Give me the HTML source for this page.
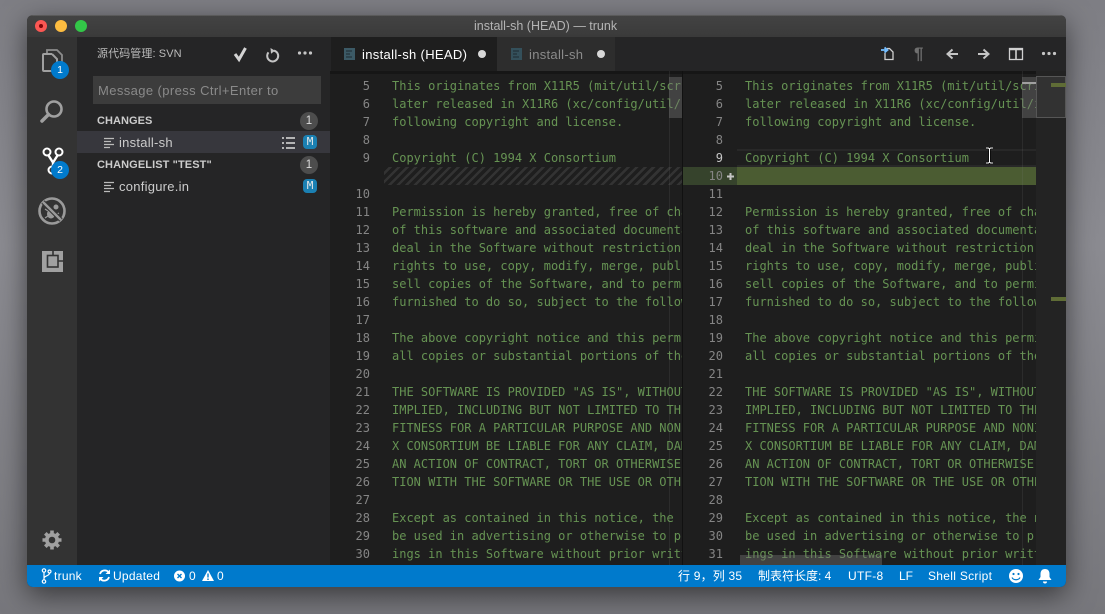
<!DOCTYPE html>
<html><head><meta charset="utf-8">
<style>
*{box-sizing:border-box}
html,body{margin:0;padding:0;width:1105px;height:614px;overflow:hidden;background:#85858b}
body{position:relative;font-family:"Liberation Sans","Noto Sans CJK SC",sans-serif}
.a{position:absolute}
#bg{left:0;top:0;width:1105px;height:614px;background:linear-gradient(180deg,#7e7e84 0,#8b8b91 40%,#77777c 100%)}
#win{left:27px;top:15px;width:1039px;height:572px;border-radius:6px;overflow:hidden;background:#1e1e1e;box-shadow:0 8px 28px rgba(0,0,0,.55)}
.t{position:absolute;white-space:nowrap}
.code{position:absolute;font:12px/18px "DejaVu Sans Mono","Liberation Mono",monospace;color:#669353;white-space:pre;overflow:hidden}
.nums{position:absolute;font:12px/18px "DejaVu Sans Mono","Liberation Mono",monospace;color:#858585;text-align:right;white-space:pre}
.badge{position:absolute;width:18px;height:18px;border-radius:9px;background:#007acc;color:#fff;font-size:10.5px;line-height:18px;text-align:center}
.cnt{position:absolute;width:18px;height:18px;border-radius:9px;background:#4d4d4d;color:#ddd;font-size:11.5px;line-height:18px;text-align:center}
.m{position:absolute;width:14px;height:14px;border-radius:4px;background:#1b80b2;color:#e8e8e8;font:11px/14px "DejaVu Sans Mono",monospace;text-align:center}
</style></head><body>
<div class="a" id="bg"></div>
<div class="a" id="win">
<!-- title bar -->
<div class="a" style="left:0;top:0;width:1039px;height:22px;background:linear-gradient(#434343,#3a3a3a);border-top:1px solid #5a5a5a"></div>
<div class="a" style="left:8px;top:5px;width:12px;height:12px;border-radius:6px;background:#fc5753"></div>
<div class="a" style="left:12px;top:9px;width:4px;height:4px;border-radius:2px;background:#7e0508"></div>
<div class="a" style="left:28px;top:5px;width:12px;height:12px;border-radius:6px;background:#fdbc40"></div>
<div class="a" style="left:48px;top:5px;width:12px;height:12px;border-radius:6px;background:#33c748"></div>
<div class="t" style="left:447px;top:3px;font-size:12.5px;line-height:16px;color:#b4b4b4">install-sh (HEAD) — trunk</div>
<!-- activity bar -->
<div class="a" style="left:0;top:22px;width:50px;height:528px;background:#333"></div>
<!-- sidebar -->
<div class="a" style="left:50px;top:22px;width:253px;height:528px;background:#252526"></div>
<svg class="a" style="left:0;top:22px" width="50" height="528" viewBox="0 0 50 528" fill="none">
<path d="M20 16v-3h10l5 5v14" stroke="#9c9c9c" stroke-width="1.800" opacity=".85"/>
<path d="M25 17h-8a1 1 0 0 0-1 1v15a1 1 0 0 0 1 1h10M25 17l5 5v10" stroke="#a0a0a0" stroke-width="2" fill="#333"/>
<circle cx="27" cy="72" r="7.500" stroke="#a0a0a0" stroke-width="2.600"/>
<path d="M21.500 77.500l-6.500 6.500" stroke="#a0a0a0" stroke-width="3.500" stroke-linecap="round"/>
<circle cx="20" cy="115" r="3.500" stroke="#fff" stroke-width="2"/>
<circle cx="32" cy="115" r="3.500" stroke="#fff" stroke-width="2"/>
<circle cx="25" cy="133" r="3.500" stroke="#fff" stroke-width="2"/>
<path d="M21.500 118.500l4.500 7 4.500-7M26 125v5" stroke="#fff" stroke-width="2.400"/>
<circle cx="25" cy="174" r="12.500" stroke="#9a9a9a" stroke-width="2.600"/>
<ellipse cx="24" cy="177" rx="4" ry="4.500" fill="#9a9a9a"/>
<circle cx="29" cy="170" r="2.500" fill="#9a9a9a"/>
<path d="M18 172l3 2M18 181l3-2M32 176l-2 1" stroke="#9a9a9a" stroke-width="1.200"/>
<path d="M16 165l18 18" stroke="#333" stroke-width="4.500"/>
<path d="M16 165l18 18" stroke="#9a9a9a" stroke-width="2.400"/>
<rect x="15" y="214" width="21" height="21" fill="#a0a0a0"/>
<rect x="20.500" y="218.500" width="10.500" height="11.500" fill="#a0a0a0" stroke="#333" stroke-width="1.600"/>
<path d="M26 214v4.500M31 224h5" stroke="#333" stroke-width="1.600"/>
<g stroke="#a0a0a0" stroke-width="3.600"><path d="M25 493.500v19M15.500 503h19M18.300 496.300l13.400 13.400M31.700 496.300l-13.400 13.400"/></g>
<circle cx="25" cy="503" r="7" fill="#a0a0a0"/>
<circle cx="25" cy="503" r="3.300" fill="#333"/>
</svg>
<div class="badge" style="left:24px;top:46px">1</div>
<div class="badge" style="left:24px;top:146px">2</div>
<!-- sidebar content -->
<div class="t" style="left:70px;top:31px;font-size:11px;line-height:16px;color:#bbb;letter-spacing:.1px">源代码管理: SVN</div>
<svg class="a" style="left:200px;top:28px" width="100" height="24" viewBox="0 0 100 24" fill="none">
<path d="M8 11l4 5.500L18.500 5" stroke="#d4d4d4" stroke-width="3"/>
<path d="M47 7.600a5.500 5.500 0 1 1-5.500 1.800" stroke="#c5c5c5" stroke-width="2"/>
<path d="M43.500 5l4.500 2.800-4 3z" fill="#c5c5c5"/>
<circle cx="72.500" cy="10" r="1.600" fill="#c5c5c5"/><circle cx="78" cy="10" r="1.600" fill="#c5c5c5"/><circle cx="83.500" cy="10" r="1.600" fill="#c5c5c5"/>
</svg>
<div class="a" style="left:66px;top:61px;width:228px;height:28px;background:#3c3c3c"></div>
<div class="t" style="left:71px;top:68px;font-size:13px;line-height:16px;color:#8a8a8a;letter-spacing:.4px">Message (press Ctrl+Enter to</div>
<div class="t" style="left:70px;top:98px;font-size:11px;line-height:16px;font-weight:bold;color:#cccccc;letter-spacing:.05px">CHANGES</div>
<div class="cnt" style="left:273px;top:97px">1</div>
<div class="a" style="left:50px;top:116px;width:253px;height:22px;background:#37373d"></div>
<svg class="a" style="left:77px;top:122px" width="12" height="12"><path d="M0 1.500h10M0 4.500h7M0 7.500h10M0 10.500h6" stroke="#bbb" stroke-width="1.200"/></svg>
<div class="t" style="left:92px;top:120px;font-size:13px;line-height:16px;color:#ccc;letter-spacing:.25px">install-sh</div>
<svg class="a" style="left:255px;top:121px" width="14" height="14"><path d="M4 2h9M4 7h9M4 12h9" stroke="#ddd" stroke-width="1.500"/><path d="M0 2h2M0 7h2M0 12h2" stroke="#ddd" stroke-width="1.500"/></svg>
<div class="m" style="left:276px;top:120px">M</div>
<div class="t" style="left:70px;top:142px;font-size:11px;line-height:16px;font-weight:bold;color:#cccccc;letter-spacing:.1px">CHANGELIST "TEST"</div>
<div class="cnt" style="left:273px;top:141px">1</div>
<svg class="a" style="left:77px;top:166px" width="12" height="12"><path d="M0 1.500h10M0 4.500h7M0 7.500h10M0 10.500h6" stroke="#bbb" stroke-width="1.200"/></svg>
<div class="t" style="left:92px;top:164px;font-size:13px;line-height:16px;color:#ccc;letter-spacing:.25px">configure.in</div>
<div class="m" style="left:276px;top:164px">M</div>
<!-- tabs -->
<div class="a" style="left:303px;top:22px;width:736px;height:34px;background:#252526"></div>
<div class="a" style="left:304px;top:22px;width:166px;height:34px;background:#1e1e1e"></div>
<div class="a" style="left:470px;top:22px;width:118px;height:34px;background:#2d2d2d"></div>
<svg class="a" style="left:317px;top:33px" width="11" height="12"><rect width="11" height="12" fill="#3c5a66"/><path d="M2 3h6M2 6h4M2 9h6" stroke="#1e2a30" stroke-width="1"/></svg>
<div class="t" style="left:335px;top:32px;font-size:13px;line-height:16px;color:#fff;letter-spacing:.33px">install-sh (HEAD)</div>
<div class="a" style="left:451px;top:35px;width:8px;height:8px;border-radius:4px;background:#d8d8d8"></div>
<svg class="a" style="left:484px;top:33px" width="11" height="12"><rect width="11" height="12" fill="#34505b"/><path d="M2 3h6M2 6h4M2 9h6" stroke="#1e2a30" stroke-width="1"/></svg>
<div class="t" style="left:502px;top:32px;font-size:13px;line-height:16px;color:#8b8b8b;letter-spacing:.3px">install-sh</div>
<div class="a" style="left:570px;top:35px;width:8px;height:8px;border-radius:4px;background:#d8d8d8"></div>
<svg class="a" style="left:850px;top:26px" width="189" height="26" viewBox="0 0 189 26" fill="none">
<path d="M8 12v6.500h8V11l-3.500-3.500H10" stroke="#d0d0d0" stroke-width="1.300"/>
<path d="M4 9h6M7.500 6.500l3 2.500-3 2.500" stroke="#75beff" stroke-width="1.800"/>
<text x="37" y="18" font-family="Liberation Sans,sans-serif" font-size="17" font-weight="bold" fill="#6f6f6f">¶</text>
<path d="M71 13h10M75.500 8.500l-5 4.500 5 4.500" stroke="#c5c5c5" stroke-width="2"/>
<path d="M101 13h10M106.500 8.500l5 4.500-5 4.500" stroke="#c5c5c5" stroke-width="2"/>
<rect x="132.500" y="7.500" width="13" height="11" stroke="#d0d0d0" stroke-width="1.300"/>
<path d="M139 7.500v11M132.500 8.500h13" stroke="#d0d0d0" stroke-width="1.600"/>
<circle cx="166.500" cy="12.500" r="1.600" fill="#c5c5c5"/><circle cx="172" cy="12.500" r="1.600" fill="#c5c5c5"/><circle cx="177.500" cy="12.500" r="1.600" fill="#c5c5c5"/>
</svg>
<!-- editor backgrounds -->
<div class="a" style="left:303px;top:56px;width:736px;height:494px;background:#1e1e1e"></div>
<div class="a" style="left:303px;top:56px;width:736px;height:3px;background:#161616"></div>
<!-- left pane -->
<div class="nums" style="left:303px;top:62px;width:40px">5
6
7
8
9

10
11
12
13
14
15
16
17
18
19
20
21
22
23
24
25
26
27
28
29
30</div>
<div class="code" style="left:365px;top:62px;width:290px;height:488px">This originates from X11R5 (mit/util/scripts/install.sh)
later released in X11R6 (xc/config/util/install.sh)
following copyright and license.

Copyright (C) 1994 X Consortium


Permission is hereby granted, free of charge, to any person
of this software and associated documentation files
deal in the Software without restriction, including
rights to use, copy, modify, merge, publish, distribute
sell copies of the Software, and to permit persons
furnished to do so, subject to the following conditions

The above copyright notice and this permission notice
all copies or substantial portions of the Software.

THE SOFTWARE IS PROVIDED "AS IS", WITHOUT WARRANTY
IMPLIED, INCLUDING BUT NOT LIMITED TO THE WARRANTIES
FITNESS FOR A PARTICULAR PURPOSE AND NONINFRINGEMENT
X CONSORTIUM BE LIABLE FOR ANY CLAIM, DAMAGES OR
AN ACTION OF CONTRACT, TORT OR OTHERWISE, ARISING
TION WITH THE SOFTWARE OR THE USE OR OTHER DEALINGS

Except as contained in this notice, the name of
be used in advertising or otherwise to promote
ings in this Software without prior written</div>
<div class="a" style="left:357px;top:152px;width:298px;height:18px;background:repeating-linear-gradient(135deg,#1e1e1e 0,#1e1e1e 3.500px,#333 3.500px,#333 6px)"></div>
<div class="a" style="left:642px;top:62px;width:13px;height:41px;background:rgba(121,121,121,.4)"></div>
<div class="a" style="left:642px;top:56px;width:1px;height:494px;background:rgba(127,127,127,.15)"></div>
<div class="a" style="left:655px;top:56px;width:1px;height:494px;background:#111"></div>
<!-- right pane -->
<div class="a" style="left:656px;top:152px;width:54px;height:18px;background:#36432c"></div>
<div class="a" style="left:710px;top:152px;width:299px;height:18px;background:#4b5c32"></div>
<div class="a" style="left:710px;top:134px;width:299px;height:18px;border-top:2px solid #282828;border-bottom:2px solid #282828"></div>
<div class="nums" style="left:656px;top:62px;width:40px">5
6
7
8
<span style="color:#c6c6c6">9</span>
10
11
12
13
14
15
16
17
18
19
20
21
22
23
24
25
26
27
28
29
30
31</div>
<svg class="a" style="left:699px;top:157px" width="9" height="9"><path d="M4.500 1v7M1 4.500h7" stroke="#c5c5c5" stroke-width="2"/></svg>
<div class="code" style="left:718px;top:62px;width:291px;height:488px">This originates from X11R5 (mit/util/scripts/install.sh)
later released in X11R6 (xc/config/util/install.sh)
following copyright and license.

Copyright (C) 1994 X Consortium


Permission is hereby granted, free of charge, to any person
of this software and associated documentation files
deal in the Software without restriction, including
rights to use, copy, modify, merge, publish, distribute
sell copies of the Software, and to permit persons
furnished to do so, subject to the following conditions

The above copyright notice and this permission notice
all copies or substantial portions of the Software.

THE SOFTWARE IS PROVIDED "AS IS", WITHOUT WARRANTY
IMPLIED, INCLUDING BUT NOT LIMITED TO THE WARRANTIES
FITNESS FOR A PARTICULAR PURPOSE AND NONINFRINGEMENT
X CONSORTIUM BE LIABLE FOR ANY CLAIM, DAMAGES OR
AN ACTION OF CONTRACT, TORT OR OTHERWISE, ARISING
TION WITH THE SOFTWARE OR THE USE OR OTHER DEALINGS

Except as contained in this notice, the name of
be used in advertising or otherwise to promote
ings in this Software without prior written</div>
<div class="a" style="left:995px;top:62px;width:14px;height:41px;background:rgba(121,121,121,.4)"></div>
<div class="a" style="left:995px;top:67px;width:14px;height:2px;background:#a0a0a0"></div>
<div class="a" style="left:995px;top:56px;width:1px;height:494px;background:rgba(127,127,127,.15)"></div>
<div class="a" style="left:713px;top:540px;width:142px;height:10px;background:rgba(121,121,121,.4)"></div>
<!-- minimap -->
<div class="a" style="left:1009px;top:56px;width:30px;height:494px;background:#232323"></div>
<div class="a" style="left:1009px;top:61px;width:30px;height:42px;background:#323232;border:1px solid #565656"></div>
<div class="a" style="left:1024px;top:68px;width:15px;height:4px;background:#5f6c36"></div>
<div class="a" style="left:1024px;top:282px;width:15px;height:4px;background:#5f6c36"></div>
<!-- I-beam cursor -->
<svg class="a" style="left:957px;top:132px" width="11" height="17"><path d="M2 1h2.500l1 1 1-1H9M5.500 2v13M2 16h2.500l1-1 1 1H9" stroke="#000" stroke-width="2.200" fill="none"/><path d="M2 1h2.500l1 1 1-1H9M5.500 2v13M2 16h2.500l1-1 1 1H9" stroke="#fff" stroke-width="1" fill="none"/></svg>
<!-- status bar -->
<div class="a" style="left:0;top:550px;width:1039px;height:22px;background:#007acc"></div>
<svg class="a" style="left:12px;top:552px" width="200" height="18" viewBox="0 0 200 18" fill="none">
<circle cx="5" cy="3.500" r="1.700" stroke="#fff" stroke-width="1.200"/><circle cx="5" cy="14.500" r="1.700" stroke="#fff" stroke-width="1.200"/><circle cx="10.500" cy="4.500" r="1.500" stroke="#fff" stroke-width="1.200"/>
<path d="M5 5.500v7M10.500 6c0 3-4.500 2.500-5.500 5" stroke="#fff" stroke-width="1.200"/>
<path d="M61 7a5 5 0 0 1 8.500-2M70 10a5 5 0 0 1-8.500 2" stroke="#fff" stroke-width="1.800"/>
<path d="M71 2.500v4.500h-4.500zM60 14.500v-4.500h4.500z" fill="#fff"/>
<circle cx="140.500" cy="9" r="5.500" fill="#fff"/>
<path d="M138.500 7l4 4M142.500 7l-4 4" stroke="#007acc" stroke-width="1.400"/>
<path d="M169 3l6 11h-12z" fill="#fff"/><path d="M169 6.500v4M169 11.500v1.500" stroke="#007acc" stroke-width="1.400"/>
</svg>
<div class="t" style="left:27px;top:553px;font-size:12px;line-height:16px;color:#fff;letter-spacing:.25px">trunk</div>
<div class="t" style="left:86px;top:553px;font-size:12px;line-height:16px;color:#fff;letter-spacing:.25px">Updated</div>
<div class="t" style="left:162px;top:553px;font-size:12px;line-height:16px;color:#fff">0</div>
<div class="t" style="left:190px;top:553px;font-size:12px;line-height:16px;color:#fff">0</div>
<div class="t" style="left:651px;top:553px;font-size:12px;line-height:16px;color:#fff;letter-spacing:.2px">行 9，列 35</div>
<div class="t" style="left:731px;top:553px;font-size:12px;line-height:16px;color:#fff">制表符长度: 4</div>
<div class="t" style="left:821px;top:553px;font-size:12px;line-height:16px;color:#fff;letter-spacing:.3px">UTF-8</div>
<div class="t" style="left:872px;top:553px;font-size:12px;line-height:16px;color:#fff">LF</div>
<div class="t" style="left:901px;top:553px;font-size:12px;line-height:16px;color:#fff;letter-spacing:.3px">Shell Script</div>
<svg class="a" style="left:980px;top:552px" width="50" height="18" viewBox="0 0 50 18" fill="none">
<circle cx="9" cy="9" r="7" fill="#fff"/>
<circle cx="6.500" cy="7" r="1.100" fill="#007acc"/><circle cx="11.500" cy="7" r="1.100" fill="#007acc"/>
<path d="M5 10.500c1.500 3 6.500 3 8 0" stroke="#007acc" stroke-width="1.200"/>
<path d="M38 2c-3 0-4.500 2-4.500 5v3l-2 3h13l-2-3v-3c0-3-1.500-5-4.500-5z" fill="#fff"/>
<path d="M36 14.500h4a2 2 0 0 1-4 0z" fill="#fff"/>
</svg>
</div>
</body></html>
